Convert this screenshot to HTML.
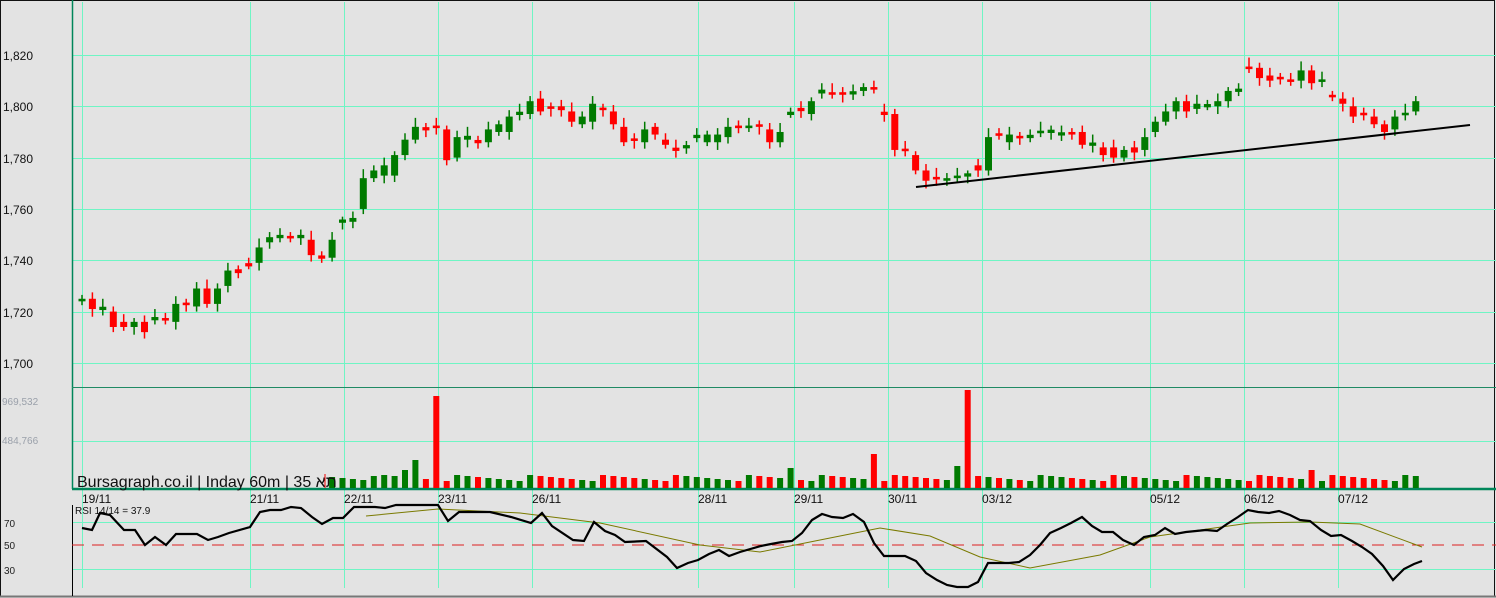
<!DOCTYPE html>
<html><head><meta charset="utf-8"><style>
html,body{margin:0;padding:0;background:#e3e3e3;}
svg{display:block;font-family:"Liberation Sans",sans-serif;}
</style></head><body>
<svg id="s" width="1496" height="598" xmlns="http://www.w3.org/2000/svg">
<rect width="1496" height="598" fill="#e3e3e3"/>
<rect x="0.5" y="0.5" width="1494" height="596" fill="none" stroke="#111" stroke-width="1"/>
<line x1="0" y1="596.5" x2="1496" y2="596.5" stroke="#777" stroke-width="2"/>
<g id="grid" stroke="#6ff5c4" stroke-width="1"></g>
<line x1="72.5" y1="0" x2="72.5" y2="489" stroke="#00865a" stroke-width="1.5"/>
<line x1="72" y1="387.5" x2="1496" y2="387.5" stroke="#1f8a64" stroke-width="1"/>
<line x1="72" y1="489" x2="1496" y2="489" stroke="#00865a" stroke-width="2.5"/>
<line x1="72.5" y1="505" x2="72.5" y2="596" stroke="#000" stroke-width="1"/>
<g font-size="12" fill="#111">
<text x="3" y="60">1,820</text><text x="3" y="111">1,800</text><text x="3" y="163">1,780</text>
<text x="3" y="214">1,760</text><text x="3" y="265">1,740</text><text x="3" y="317">1,720</text><text x="3" y="368">1,700</text>
</g>
<g font-size="10" fill="#9aa0aa"><text x="2" y="405">969,532</text><text x="2" y="444">484,766</text></g>
<g font-size="10" fill="#222"><text x="4" y="527">70</text><text x="4" y="549">50</text><text x="4" y="574">30</text></g>
<line x1="72" y1="545" x2="1496" y2="545" stroke="#d22" stroke-width="1" stroke-dasharray="12,8"/>
<g id="c"></g>
<line x1="916" y1="187" x2="1470" y2="125" stroke="#000" stroke-width="2"/>
<text x="77" y="487" font-size="16" fill="#111">Bursagraph.co.il | Inday 60m | 35 תא</text>
<line x1="325" y1="474" x2="325" y2="488" stroke="#e00" stroke-width="1"/>
<g font-size="12" fill="#111" id="dates"></g>
<text x="75" y="514" font-size="10" fill="#111">RSI 14/14 = 37.9</text>
<polyline fill="none" stroke="#7a7a00" stroke-width="1" points="366,516 438,509 520,513 600,523 700,545 760,552 820,540 880,528 930,536 980,557 1030,568 1100,555 1150,537 1250,523 1310,522 1360,524 1422,547"/>
<polyline fill="none" stroke="#000" stroke-width="2.2" points="82,528 92,530 100,513 110,515 124,530 135,530 145,545 155,537 166,545 176,534 197,534 208,540 218,537 229,533 250,527 260,512 270,510 281,510 291,507 301,508 312,517 322,524 333,518 343,518 354,507 375,507 385,508 396,505 438,505 448,521 459,512 490,512 511,517 531,523 542,513 552,526 573,540 584,541 594,522 605,531 615,535 625,542 646,541 667,557 677,568 688,563 698,560 709,554 719,550 729,556 740,552 761,546 771,544 782,542 792,541 802,533 812,520 822,514 832,517 843,518 853,514 864,522 874,543 884,556 905,556 916,561 926,573 937,580 947,585 957,587 968,587 978,582 988,563 1009,563 1019,562 1030,555 1040,545 1050,533 1061,528 1071,523 1082,517 1092,526 1102,532 1113,532 1123,540 1134,545 1144,537 1155,535 1165,528 1175,534 1186,532 1206,530 1217,531 1227,524 1238,517 1248,510 1258,512 1269,513 1279,511 1290,515 1300,520 1310,521 1321,530 1331,536 1341,535 1352,541 1362,547 1372,554 1383,566 1393,580 1404,569 1414,564 1422,561"/>
</svg>
<script>
var NS="http://www.w3.org/2000/svg";
function el(p,t,a){var e=document.createElementNS(NS,t);for(var k in a)e.setAttribute(k,a[k]);p.appendChild(e);return e;}
var g=document.getElementById("grid");
[82,250,344,438,532,698,794,888,982,1150,1244,1338].forEach(function(x){el(g,"line",{x1:x+.5,y1:2,x2:x+.5,y2:588});});
[55,106,158,209,260,312,363,441,522,569].forEach(function(y){el(g,"line",{x1:72,y1:y+.5,x2:1496,y2:y+.5});});
var d=document.getElementById("dates");
[[82,"19/11"],[250,"21/11"],[344,"22/11"],[438,"23/11"],[532,"26/11"],[698,"28/11"],[794,"29/11"],[888,"30/11"],[982,"03/12"],[1150,"05/12"],[1244,"06/12"],[1338,"07/12"]].forEach(function(a){var t=el(d,"text",{x:a[0],y:503});t.textContent=a[1];});
var oc=[[1724,1725],[1725,1721],[1721,1721.5],[1720,1714],[1716,1714],[1714,1716],[1716,1712],[1717,1717.5],[1717.5,1716.5],[1716,1723],[1723.5,1722.5],[1722,1729],[1729,1723],[1723,1729],[1730,1736],[1736.5,1735],[1738.5,1738],[1739,1745],[1747,1749],[1749,1749.5],[1749.5,1748.5],[1749,1749.5],[1748,1742],[1741.5,1741],[1741,1748],[1755,1755.5],[1755,1756.5],[1760,1772],[1772,1775],[1773,1777],[1773,1781],[1781,1787],[1787,1792],[1791.5,1791],[1792.5,1791.5],[1791,1779],[1780,1788],[1787,1788.5],[1786.5,1786],[1786,1791],[1790,1793],[1790,1796],[1797,1797.5],[1797,1802],[1803,1798],[1800,1799],[1800,1798.5],[1798,1794],[1793,1796],[1794,1801],[1799.5,1798.5],[1798,1793],[1792,1786],[1787.5,1786.5],[1786,1791],[1792,1789],[1787,1785],[1783.5,1783],[1784,1784.5],[1788,1788.5],[1786,1789],[1786,1789],[1788,1792],[1792.5,1791.5],[1791.5,1792.5],[1793,1792],[1791,1786],[1786,1790],[1797,1797.5],[1799,1798.5],[1797,1802],[1805,1806.5],[1805.5,1804.5],[1805.5,1804.5],[1805,1805.5],[1806,1807.5],[1807.5,1806.5],[1797.5,1797],[1797,1783],[1783.5,1782.5],[1781,1775],[1775,1771],[1772.5,1771.5],[1771,1772],[1772,1773],[1773,1773.5],[1777,1775],[1775,1788],[1789.5,1788.5],[1786,1789],[1788.5,1787.5],[1788,1788.5],[1789.5,1790.5],[1790,1790.5],[1789,1789.5],[1790,1789],[1790,1785],[1785,1785.5],[1784,1781],[1784,1780],[1780,1783],[1784,1782],[1783,1788],[1790,1794],[1794,1798],[1798,1802],[1802,1798],[1799,1801],[1800,1800.5],[1800,1802],[1802,1806],[1806,1806.5],[1815.5,1814.5],[1815,1811],[1812,1810],[1811.5,1810.5],[1810.5,1809.5],[1810,1814],[1814,1809],[1809.5,1810.5],[1804.5,1803.5],[1803,1801],[1800,1796],[1797.5,1796.5],[1796,1793],[1793,1790],[1791,1796],[1796.5,1797.5],[1798,1802]];
var c=document.getElementById("c");
function Y(p){return 55+(1820-p)*2.566;}
var spikes={34:92,85:98,32:28,76:34,31:18,28:12,84:22,118:18,68:20};
for(var i=0;i<oc.length;i++){
 var x=82+i*10.42,o=oc[i][0],cl=oc[i][1],up=cl>=o,col=up?"#007a00":"#ff0000";
 var hi=Math.max(o,cl)+1.5+((i*7)%5)*0.5,lo=Math.min(o,cl)-1.5-((i*3)%4)*0.5;
 el(c,"line",{x1:x.toFixed(1),y1:Y(hi),x2:x.toFixed(1),y2:Y(lo),stroke:col,"stroke-width":1.5});
 var t=Y(Math.max(o,cl)),b=Y(Math.min(o,cl));if(b-t<2){t-=1;b+=1;}
 el(c,"rect",{x:(x-3.5).toFixed(1),y:t,width:7,height:b-t,fill:col});
 if(i>=24){var h=spikes[i]||(7+((i*13)%7));
 var vc=(i==85)?"#ff0000":col;
 el(c,"rect",{x:(x-3).toFixed(1),y:488-h,width:6,height:h,fill:vc});}
}
</script>
</body></html>
